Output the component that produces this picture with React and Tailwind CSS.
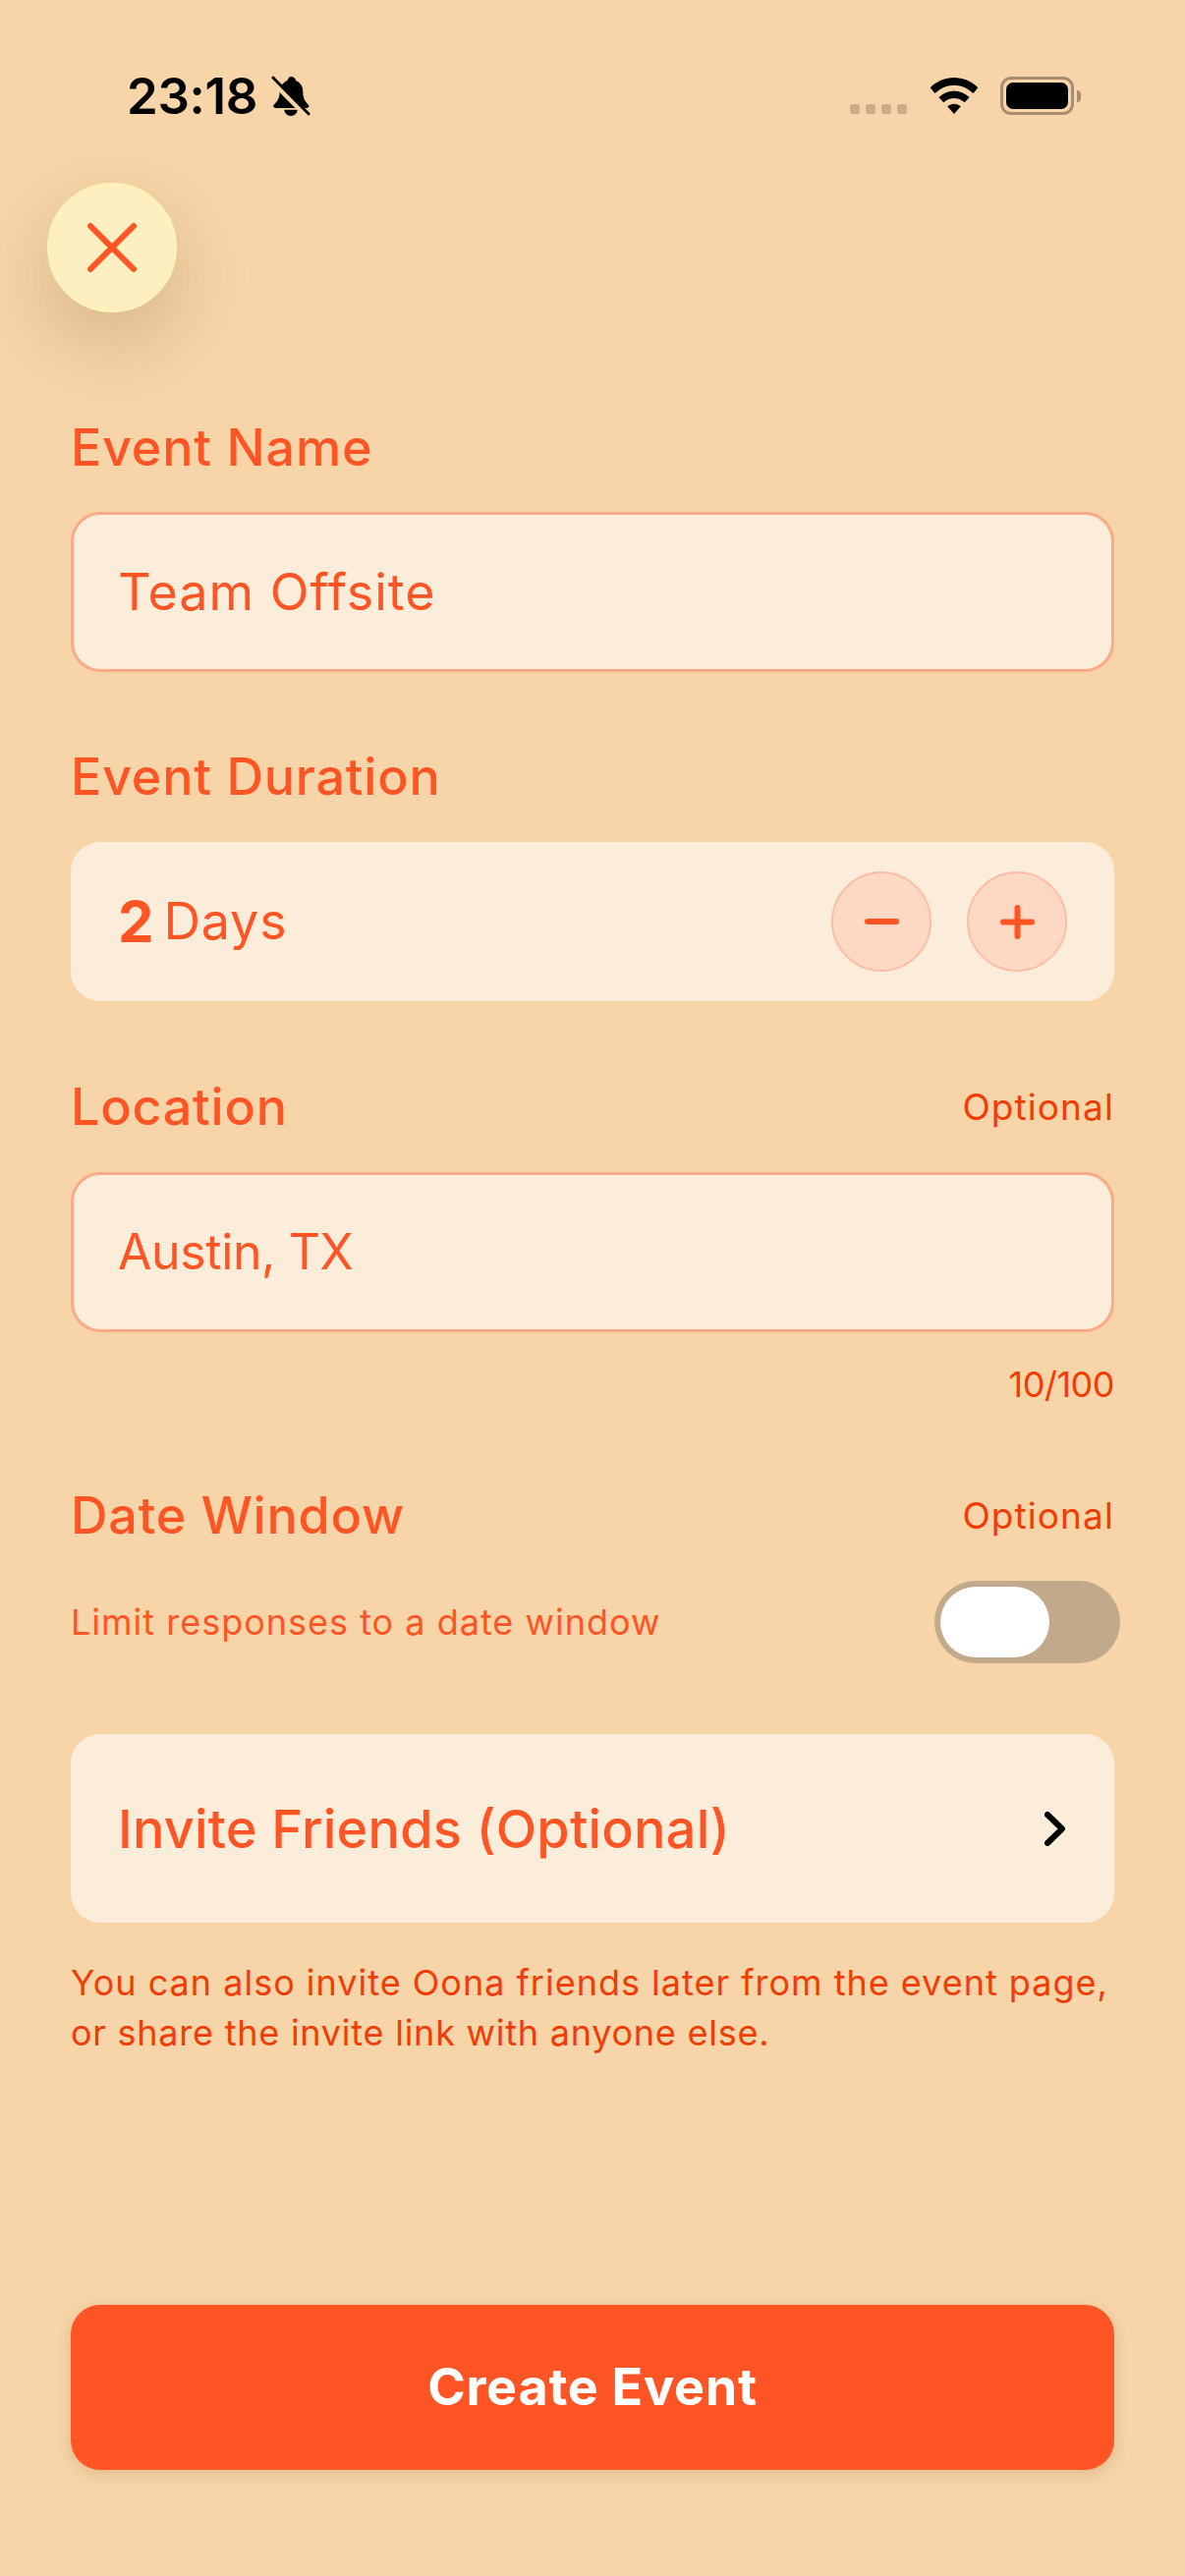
import { useState } from "react";

function BellOff() {
  return (
    <svg width="40" height="42" viewBox="0 0 42 44" className="ml-[14px] mt-[5px] shrink-0">
      <path
        d="M21 1c3 0 5 2 5.500 4.500C32 7.500 34 12.500 34 18c0 6 2 9 6 13.500 1 1.500 0 3-2 3H5c-2.500 0-3.500-2-2-3.500 4-4 6-7.500 6-12.500 0-6 3-11 8.500-13.500C18 3 19 1 21 1z"
        fill="#000"
      />
      <path d="M14 36.500h14c0 3.500-3 6.500-7 6.500s-7-3-7-6.500z" fill="#000" />
      <path d="M0 0L42 42" stroke="#F7D5A9" strokeWidth="7" transform="translate(-1 3)" />
      <path d="M2 2L40 41" stroke="#000" strokeWidth="3" strokeLinecap="round" />
    </svg>
  );
}

function Wifi() {
  return (
    <svg width="50" height="37" viewBox="0 0 50 38" className="ml-[23px] mb-[1px]">
      <path d="M0 10.500C14-3.500 36-3.500 50 10.500l-5 6C33 5 17 5 5 16.500z" fill="#000" />
      <path d="M9 20.500c9.500-9 22.500-9 32 0l-5 5.500c-6.500-6-15.500-6-22 0z" fill="#000" />
      <path d="M18 30c4-3.500 10-3.500 14 0l-7 8z" fill="#000" />
    </svg>
  );
}

function Battery() {
  return (
    <div className="flex items-center ml-[22px]">
      <div className="w-[75px] h-[39px] rounded-[11px] border-[3px] border-[#A68D6E] p-[3px]">
        <div className="w-full h-full rounded-[7px] bg-black" />
      </div>
      <div className="w-[4px] h-[12px] ml-[3px] rounded-r-full bg-[#A68D6E]" />
    </div>
  );
}

function StatusBar() {
  return (
    <div className="h-[186px] shrink-0 flex items-start pt-[72px] pl-[129px] pr-[106px]">
      <span className="text-[51px] leading-[52px] font-semibold text-black tracking-[-0.3px]">23:18</span>
      <BellOff />
      <div className="ml-auto mt-[6px] flex items-end">
        <div className="flex gap-[6px] mb-[1px]">
          <span className="w-[10px] h-[10px] rounded-[3px] bg-[#C9AD89]" />
          <span className="w-[10px] h-[10px] rounded-[3px] bg-[#C9AD89]" />
          <span className="w-[10px] h-[10px] rounded-[3px] bg-[#C9AD89]" />
          <span className="w-[10px] h-[10px] rounded-[3px] bg-[#C9AD89]" />
        </div>
        <Wifi />
        <Battery />
      </div>
    </div>
  );
}

function Label({ children, optional }) {
  return (
    <div className="h-[60px] flex items-center justify-between">
      <span className="text-[52px] leading-[60px] font-medium tracking-[0.8px] text-[#FF5525]">{children}</span>
      {optional && <span className="text-[37px] leading-[60px] tracking-[1.1px] text-[#F23C05]">Optional</span>}
    </div>
  );
}

function TextBox({ children, top }) {
  return (
    <div className={top + " h-[163px] rounded-[30px] border-[3px] border-[#FBAA88] bg-[#FCEDDA] pl-[45px] flex items-center"}>
      {children}
    </div>
  );
}

function RoundBtn({ children, onClick }) {
  return (
    <button
      onClick={onClick}
      className="w-[102px] h-[102px] rounded-full border-[2px] border-[#FDBDA5] bg-[#FDD9C4] flex items-center justify-center"
    >
      {children}
    </button>
  );
}

export default function App() {
  const [days, setDays] = useState(2);
  const [limit, setLimit] = useState(false);

  return (
    <div className="w-[1206px] h-[2622px] bg-[#F7D5A9] flex flex-col overflow-hidden font-['Inter',sans-serif]">
      <StatusBar />

      <div className="h-[240px] shrink-0 pl-[48px]">
        <button className="w-[132px] h-[132px] rounded-full bg-[#FEEFC1] border-[2px] border-[#FDF3B5] shadow-[0_30px_80px_rgba(90,50,10,0.2)] flex items-center justify-center">
          <svg width="52" height="52" viewBox="0 0 52 52" fill="none" stroke="#FF5525" strokeWidth="6" strokeLinecap="round">
            <path d="M4 4L48 48M48 4L4 48" />
          </svg>
        </button>
      </div>

      <div className="px-[72px] flex flex-col flex-1 pb-[108px]">
        <Label>Event Name</Label>
        <TextBox top="mt-[35px]">
          <span className="text-[52px] tracking-[1px] text-[#FF5525]">Team Offsite</span>
        </TextBox>

        <div className="mt-[77px]">
          <Label>Event Duration</Label>
          <div className="mt-[36px] h-[162px] rounded-[30px] bg-[#FCEDDA] pl-[48px] pr-[48px] flex items-center">
            <span className="text-[58px] font-bold text-[#FF5525] mr-[10px]">{days}</span>
            <span className="text-[52px] tracking-[0.8px] text-[#FF5525]">Days</span>
            <div className="ml-auto flex gap-[36px]">
              <RoundBtn onClick={() => setDays(Math.max(1, days - 1))}>
                <span className="w-[35px] h-[6px] rounded-full bg-[#FF5525]" />
              </RoundBtn>
              <RoundBtn onClick={() => setDays(days + 1)}>
                <svg width="35" height="35" viewBox="0 0 35 35" stroke="#FF5525" strokeWidth="6" strokeLinecap="round">
                  <path d="M3 17.500h29M17.500 3v29" />
                </svg>
              </RoundBtn>
            </div>
          </div>
        </div>

        <div className="mt-[78px]">
          <Label optional>Location</Label>
          <TextBox top="mt-[36px]">
            <span className="text-[50px] tracking-[-0.4px] text-[#FF5525]">Austin, TX</span>
          </TextBox>
          <div className="mt-[33px] h-[40px] text-right text-[36px] leading-[40px] tracking-[-0.5px] text-[#F23C05]">10/100</div>
        </div>

        <div className="mt-[84px]">
          <Label optional>Date Window</Label>
          <div className="mt-[36px] flex items-center justify-between">
            <span className="text-[36px] tracking-[1px] text-[#FF5525]">Limit responses to a date window</span>
            <button
              onClick={() => setLimit(!limit)}
              className={
                limit
                  ? "w-[189px] h-[84px] -mr-[6px] rounded-full bg-[#FF5525] p-[6px] flex justify-end"
                  : "w-[189px] h-[84px] -mr-[6px] rounded-full bg-[#C2A98B] p-[6px] flex justify-start"
              }
            >
              <span className="w-[111px] h-[72px] rounded-full bg-white" />
            </button>
          </div>
        </div>

        <button className="mt-[72px] h-[192px] rounded-[30px] bg-[#FCEDDA] pl-[48px] pr-[50px] flex items-center justify-between">
          <span className="text-[54px] font-medium tracking-[0.2px] text-[#FF5525]">Invite Friends (Optional)</span>
          <svg width="21" height="35" viewBox="0 0 21 35" fill="none" stroke="#000" strokeWidth="6" strokeLinecap="round" strokeLinejoin="round">
            <path d="M3 3l15 14.500L3 32" />
          </svg>
        </button>

        <p className="mt-[36px] text-[36px] leading-[51px] tracking-[1px] text-[#F23C05]">
          You can also invite Oona friends later from the event page,
          <br />
          <span className="tracking-[0.76px]">or share the invite link with anyone else.</span>
        </p>

        <button className="mt-auto h-[168px] rounded-[30px] bg-[#FF5525] shadow-[0_4px_16px_rgba(120,70,20,0.18)] text-[52px] font-bold tracking-[0.8px] text-white">
          Create Event
        </button>
      </div>
    </div>
  );
}
